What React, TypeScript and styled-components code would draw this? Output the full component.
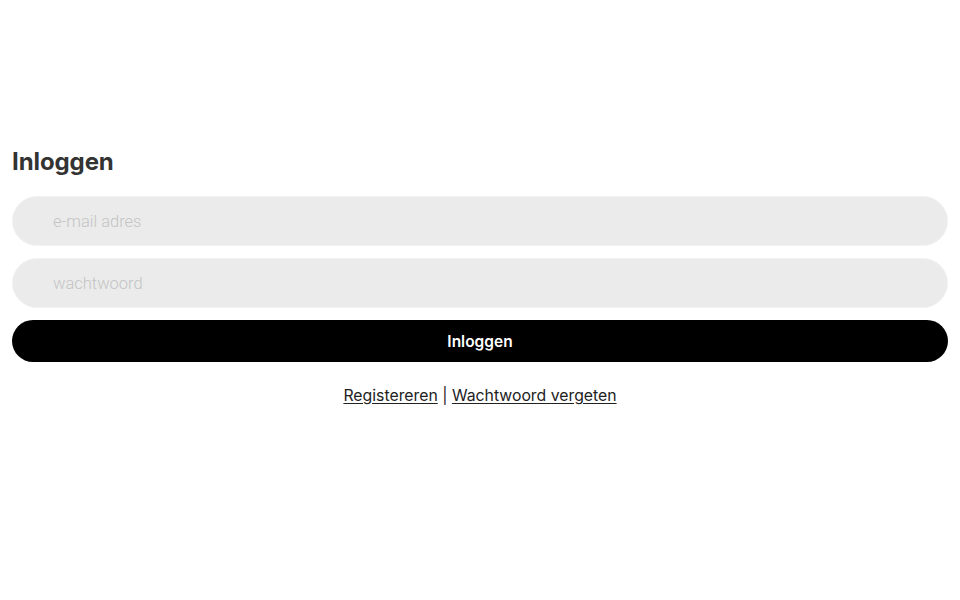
import { createGlobalStyle, styled } from "styled-components";

const GlobalStyle = createGlobalStyle`
  html, body {
    margin: 0;
    padding: 0;
    background: #ffffff;
  }
  body {
    font-family: "Inter", "Liberation Sans", sans-serif;
    color: #222222;
  }
`;

const StyledPage = styled.div`
  padding: 150px 12px 0 12px;
`;

const StyledTitle = styled.h1`
  margin: 0 0 22px 0;
  font-size: 24px;
  font-weight: 700;
  line-height: 24px;
  color: #333333;
  letter-spacing: -0.1px;
`;

const StyledForm = styled.form`
  display: flex;
  flex-direction: column;
  gap: 12px;
`;

const StyledInput = styled.input`
  box-sizing: border-box;
  width: 100%;
  height: 50px;
  border: 1px solid #f2f2f2;
  border-radius: 25px;
  background: #ebebeb;
  padding: 0 0 0 40px;
  font-family: "Roboto", "Liberation Sans", sans-serif;
  font-weight: 300;
  font-size: 16.5px;
  color: #333333;
  outline: none;

  &::placeholder {
    color: #c4c4c4;
  }
`;

const StyledButton = styled.button`
  height: 42px;
  border: none;
  border-radius: 21px;
  background: #000000;
  color: #ffffff;
  font-family: "Inter", "Liberation Sans", sans-serif;
  font-size: 15.5px;
  font-weight: 600;
  cursor: pointer;
`;

const StyledLinks = styled.div`
  margin-top: 24px;
  text-align: center;
  font-size: 15.8px;
  color: #222222;

  a {
    color: #222222;
    text-decoration: underline;
    text-underline-offset: 2px;
  }
`;

export default function App() {
  return (
    <>
      <GlobalStyle />
      <StyledPage>
        <StyledTitle>Inloggen</StyledTitle>
        <StyledForm onSubmit={(e) => e.preventDefault()}>
          <StyledInput type="email" placeholder="e-mail adres" />
          <StyledInput type="password" placeholder="wachtwoord" />
          <StyledButton type="submit">Inloggen</StyledButton>
        </StyledForm>
        <StyledLinks>
          <a href="#">Registereren</a> | <a href="#">Wachtwoord vergeten</a>
        </StyledLinks>
      </StyledPage>
    </>
  );
}
